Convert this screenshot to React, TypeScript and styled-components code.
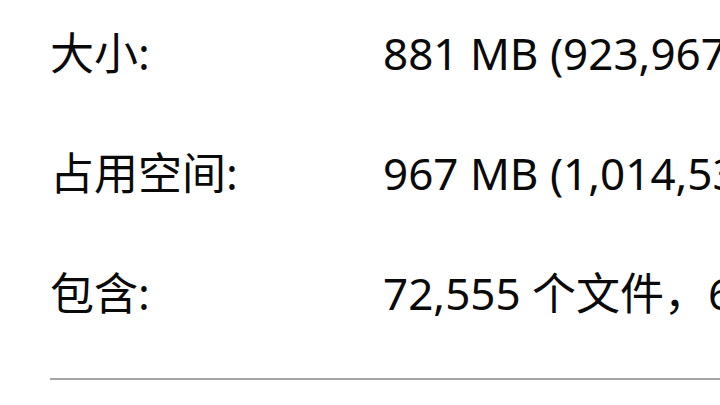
import styled, { createGlobalStyle } from "styled-components";

const GlobalStyle = createGlobalStyle`
  html, body {
    margin: 0;
    padding: 0;
    background: #ffffff;
    overflow: hidden;
  }
  body {
    width: 720px;
    height: 405px;
  }
`;

const Panel = styled.div`
  width: 720px;
  height: 405px;
  padding: 23px 0 0 50px;
  box-sizing: border-box;
  overflow: hidden;
  font-family: "Noto Sans", "Noto Sans CJK SC", sans-serif;
  font-size: 44px;
  color: #0a0a0a;
`;

const InfoGrid = styled.div`
  display: grid;
  grid-template-columns: 333px max-content;
  row-gap: 60px;
  line-height: 60px;
`;

const Label = styled.div`
  white-space: nowrap;
`;

const Value = styled.div`
  white-space: nowrap;
`;

const Divider = styled.div`
  margin-top: 55px;
  height: 2px;
  background: #a6a6a6;
`;

const rows = [
  { label: "大小:", value: "881 MB (923,967,325 字节)" },
  { label: "占用空间:", value: "967 MB (1,014,530,048 字节)" },
  { label: "包含:", value: "72,555 个文件，6,318 个文件夹" },
];

export default function App() {
  return (
    <>
      <GlobalStyle />
      <Panel>
        <InfoGrid>
          {rows.map((r) => [
            <Label key={r.label}>{r.label}</Label>,
            <Value key={r.label + "-v"}>{r.value}</Value>,
          ])}
        </InfoGrid>
        <Divider />
      </Panel>
    </>
  );
}
